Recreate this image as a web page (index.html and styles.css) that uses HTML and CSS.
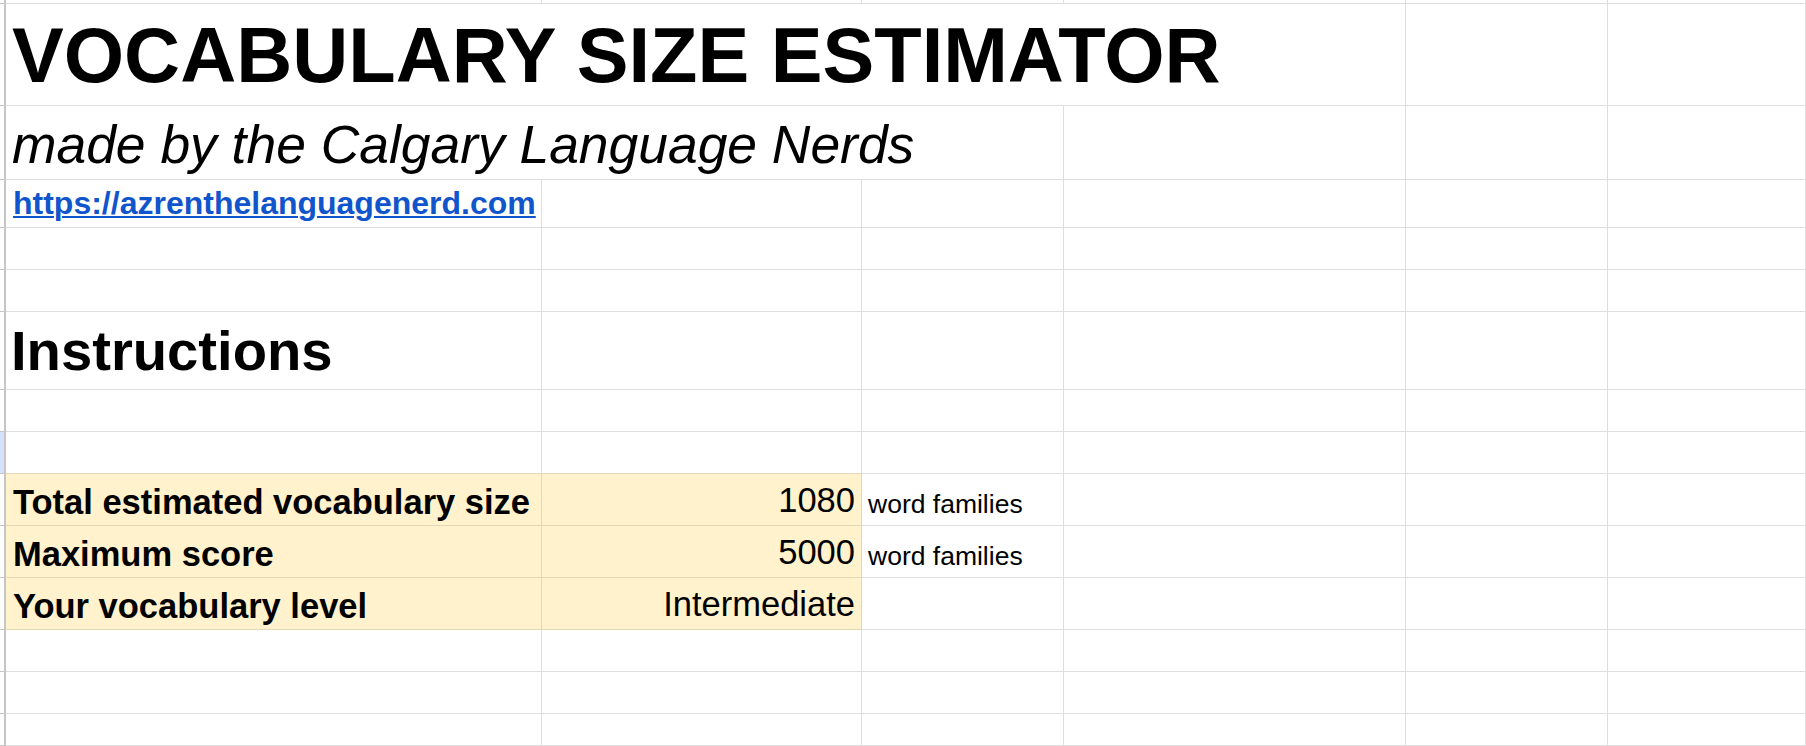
FILE: index.html
```html
<!DOCTYPE html>
<html lang="en">
<head>
<meta charset="utf-8">
<title>Vocabulary Size Estimator</title>
<link rel="stylesheet" href="styles.css">
</head>
<body>
<div class="sheet">
  <!-- row 0 (partial) -->
  <div class="h"></div><div class="c"></div><div class="c"></div><div class="c"></div><div class="c"></div><div class="c"></div><div class="c"></div>
  <!-- row 1 -->
  <div class="h"></div>
  <div class="c span4 title-cell"><span class="title">VOCABULARY SIZE ESTIMATOR</span></div>
  <div class="c"></div><div class="c"></div>
  <!-- row 2 -->
  <div class="h"></div>
  <div class="c span3 sub-cell"><span class="sub">made by the Calgary Language Nerds</span></div>
  <div class="c"></div><div class="c"></div><div class="c"></div>
  <!-- row 3 -->
  <div class="h"></div>
  <div class="c link-cell"><a class="link" href="#">https://azrenthelanguagenerd.com</a></div>
  <div class="c"></div><div class="c"></div><div class="c"></div><div class="c"></div><div class="c"></div>
  <!-- row 4 -->
  <div class="h"></div><div class="c"></div><div class="c"></div><div class="c"></div><div class="c"></div><div class="c"></div><div class="c"></div>
  <!-- row 5 -->
  <div class="h"></div><div class="c"></div><div class="c"></div><div class="c"></div><div class="c"></div><div class="c"></div><div class="c"></div>
  <!-- row 6 -->
  <div class="h"></div>
  <div class="c inst-cell"><span class="inst">Instructions</span></div>
  <div class="c"></div><div class="c"></div><div class="c"></div><div class="c"></div><div class="c"></div>
  <!-- row 7 -->
  <div class="h"></div><div class="c"></div><div class="c"></div><div class="c"></div><div class="c"></div><div class="c"></div><div class="c"></div>
  <!-- row 8 (selected) -->
  <div class="h sel"></div><div class="c tb"></div><div class="c tb"></div><div class="c"></div><div class="c"></div><div class="c"></div><div class="c"></div>
  <!-- row 9 -->
  <div class="h"></div>
  <div class="c y lbl-cell"><span class="lbl">Total estimated vocabulary size</span></div>
  <div class="c y val-cell"><span class="val">1080</span></div>
  <div class="c unit-cell"><span class="unit">word families</span></div>
  <div class="c"></div><div class="c"></div><div class="c"></div>
  <!-- row 10 -->
  <div class="h"></div>
  <div class="c y lbl-cell"><span class="lbl">Maximum score</span></div>
  <div class="c y val-cell"><span class="val">5000</span></div>
  <div class="c unit-cell"><span class="unit">word families</span></div>
  <div class="c"></div><div class="c"></div><div class="c"></div>
  <!-- row 11 -->
  <div class="h"></div>
  <div class="c y lbl-cell"><span class="lbl">Your vocabulary level</span></div>
  <div class="c y val-cell"><span class="val">Intermediate</span></div>
  <div class="c"></div><div class="c"></div><div class="c"></div><div class="c"></div>
  <!-- row 12 -->
  <div class="h"></div><div class="c"></div><div class="c"></div><div class="c"></div><div class="c"></div><div class="c"></div><div class="c"></div>
  <!-- row 13 -->
  <div class="h"></div><div class="c"></div><div class="c"></div><div class="c"></div><div class="c"></div><div class="c"></div><div class="c"></div>
  <!-- row 14 -->
  <div class="h"></div><div class="c"></div><div class="c"></div><div class="c"></div><div class="c"></div><div class="c"></div><div class="c"></div>
</div>
</body>
</html>
```

FILE: styles.css
```css
html, body {
  margin: 0;
  padding: 0;
  background: #ffffff;
  overflow: hidden;
}

body {
  width: 1806px;
  height: 746px;
  font-family: "Liberation Sans", Arial, sans-serif;
  color: #000000;
}

.sheet {
  display: grid;
  grid-template-columns: 6px 536px 320px 202px 342px 202px 198px;
  grid-template-rows: 4px 102px 74px 48px 42px 42px 78px 42px 42px 52px 52px 52px 42px 42px 32px;
  overflow: hidden;
}

.c {
  box-sizing: border-box;
  border-right: 1px solid #dfdfdf;
  border-bottom: 1px solid #dfdfdf;
  display: flex;
  align-items: flex-end;
  min-width: 0;
  white-space: nowrap;
  overflow: visible;
  background: #ffffff;
}

.h {
  box-sizing: border-box;
  border-right: 2px solid #c6c6c6;
  border-bottom: 1px solid #c6c6c6;
  background: #ffffff;
}

.h.sel {
  background: #d3e3fd;
}

.span4 { grid-column: span 4; }
.span3 { grid-column: span 3; }

.y {
  background: #fff2cc;
  border-right-color: #e3d8b6;
  border-bottom-color: #e3d8b6;
}

.tb {
  border-bottom-color: #e3d8b6;
}

.title-cell { padding: 0 0 10px 6px; }
.title {
  font-size: 77.6px;
  font-weight: bold;
  line-height: 1;
}

.sub-cell { padding: 0 0 8px 6px; }
.sub {
  font-size: 53.4px;
  font-style: italic;
  line-height: 1;
}

.link-cell { padding: 0 0 8px 7px; }
.link {
  font-size: 32px;
  font-weight: bold;
  line-height: 1;
  color: #1155cc;
  text-decoration: underline;
  text-decoration-thickness: 2px;
  text-underline-offset: 2px;
}

.inst-cell { padding: 0 0 10px 5px; }
.inst {
  font-size: 56.2px;
  font-weight: bold;
  line-height: 1;
}

.lbl-cell { padding: 0 0 6px 7px; }
.lbl {
  font-size: 34.5px;
  font-weight: bold;
  line-height: 1;
}

.val-cell {
  justify-content: flex-end;
  padding: 0 6px 8px 0;
}
.val {
  font-size: 34.5px;
  line-height: 1;
}

.unit-cell { padding: 0 0 8px 6px; }
.unit {
  font-size: 26.5px;
  line-height: 1;
}
```
